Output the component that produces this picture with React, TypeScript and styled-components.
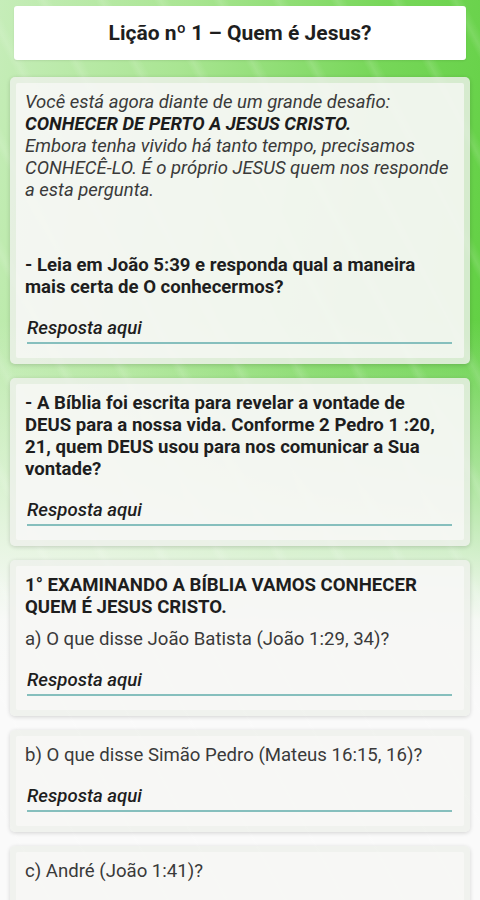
import styled, { createGlobalStyle } from 'styled-components'

const GlobalStyle = createGlobalStyle`
  html, body {
    margin: 0;
    padding: 0;
  }
  body {
    font-family: Roboto, "Noto Sans", "Liberation Sans", sans-serif;
    background: #fafafa;
  }
`

type Question = {
  text: string
  bold?: boolean
  extra?: string
}

const questions: Question[] = [
  {
    text:
      '- A Bíblia foi escrita para revelar a vontade de DEUS para a nossa vida. Conforme 2 Pedro 1 :20, 21, quem DEUS usou para nos comunicar a Sua vontade?',
    bold: true,
  },
  {
    text: '1° EXAMINANDO A BÍBLIA VAMOS CONHECER QUEM É JESUS CRISTO.',
    bold: true,
    extra: 'a) O que disse João Batista (João 1:29, 34)?',
  },
  { text: 'b) O que disse Simão Pedro (Mateus 16:15, 16)?' },
  { text: 'c) André (João 1:41)?' },
]

export default function App() {
  return (
    <Page>
      <GlobalStyle />
      <Header>
        <Title>Lição nº 1 – Quem é Jesus?</Title>
      </Header>
      <List>
        <Card>
          <Inner>
            <Intro>
              Você está agora diante de um grande desafio:
              <br />
              <strong>CONHECER DE PERTO A JESUS CRISTO.</strong>
              <br />
              Embora tenha vivido há tanto tempo, precisamos CONHECÊ-LO. É o
              próprio JESUS quem nos responde a esta pergunta.
            </Intro>
            <Ask bold spaced>
              - Leia em João 5:39 e responda qual a maneira mais certa de O
              conhecermos?
            </Ask>
            <Field>
              <Answer placeholder="Resposta aqui" />
            </Field>
          </Inner>
        </Card>
        {questions.map((q, i) => (
          <Card key={i}>
            <Inner>
              <Ask bold={q.bold}>{q.text}</Ask>
              {q.extra && <Sub>{q.extra}</Sub>}
              <Field>
                <Answer placeholder="Resposta aqui" />
              </Field>
            </Inner>
          </Card>
        ))}
      </List>
    </Page>
  )
}

const Page = styled.div`
  height: 900px;
  overflow: hidden;
  padding-top: 6px;
  box-sizing: border-box;
  background:
    repeating-linear-gradient(
      62deg,
      rgba(255, 255, 255, 0) 0px,
      rgba(255, 255, 255, 0) 38px,
      rgba(255, 255, 255, 0.12) 44px,
      rgba(255, 255, 255, 0) 52px
    ),
    linear-gradient(
      180deg,
      rgba(250, 250, 250, 0) 0px,
      rgba(250, 250, 250, 0) 320px,
      rgba(250, 250, 250, 0.5) 480px,
      rgba(250, 250, 250, 0.97) 620px,
      #fafafa 690px
    ),
    linear-gradient(
      100deg,
      #c6edb9 0%,
      #a9e592 30%,
      #78d75a 60%,
      #55cc37 100%
    );
`

const Header = styled.header`
  margin: 0 14px;
  height: 54px;
  background: #fff;
  border-radius: 3px;
  display: flex;
  align-items: center;
  justify-content: center;
  box-shadow: 0 1px 2px rgba(0, 0, 0, 0.08);
`

const Title = styled.h1`
  margin: 0;
  font-size: 21px;
  font-weight: 700;
  color: #1e1e1e;
`

const List = styled.div`
  display: flex;
  flex-direction: column;
  gap: 14px;
  margin-top: 17px;
  padding: 0 10px;
`

const Card = styled.section`
  background: rgba(238, 240, 236, 0.82);
  border-radius: 5px;
  padding: 6px;
  box-shadow: 0 1px 4px rgba(0, 0, 0, 0.16);
`

const Inner = styled.div`
  background: rgba(250, 250, 248, 0.7);
  padding: 8px 12px 14px 9px;
  border-radius: 2px;
`

const Intro = styled.p`
  margin: 0;
  font-size: 18.5px;
  line-height: 22px;
  font-style: italic;
  color: #3a3a3a;

  strong {
    color: #1c1c1c;
    font-weight: 700;
  }
`

const Ask = styled.p<{ bold?: boolean; spaced?: boolean }>`
  margin: ${(p) => (p.spaced ? '53px' : '0')} 0 0;
  font-size: 18.6px;
  line-height: 22px;
  font-weight: ${(p) => (p.bold ? 700 : 400)};
  color: ${(p) => (p.bold ? '#1e1e1e' : '#3a3a3a')};
`

const Sub = styled.p`
  margin: 10px 0 0;
  font-size: 18.6px;
  line-height: 22px;
  color: #3a3a3a;
`

const Field = styled.div`
  padding: 19px 0 0 2px;
`

const Answer = styled.input`
  display: block;
  width: 100%;
  box-sizing: border-box;
  border: none;
  border-bottom: 2px solid #86bfbd;
  background: transparent;
  outline: none;
  padding: 0 0 3px;
  height: 27px;
  font-family: Roboto, "Noto Sans", "Liberation Sans", sans-serif;
  font-size: 18.6px;
  font-style: italic;
  font-weight: 500;

  &::placeholder {
    color: #1e1e1e;
    opacity: 1;
  }
`
